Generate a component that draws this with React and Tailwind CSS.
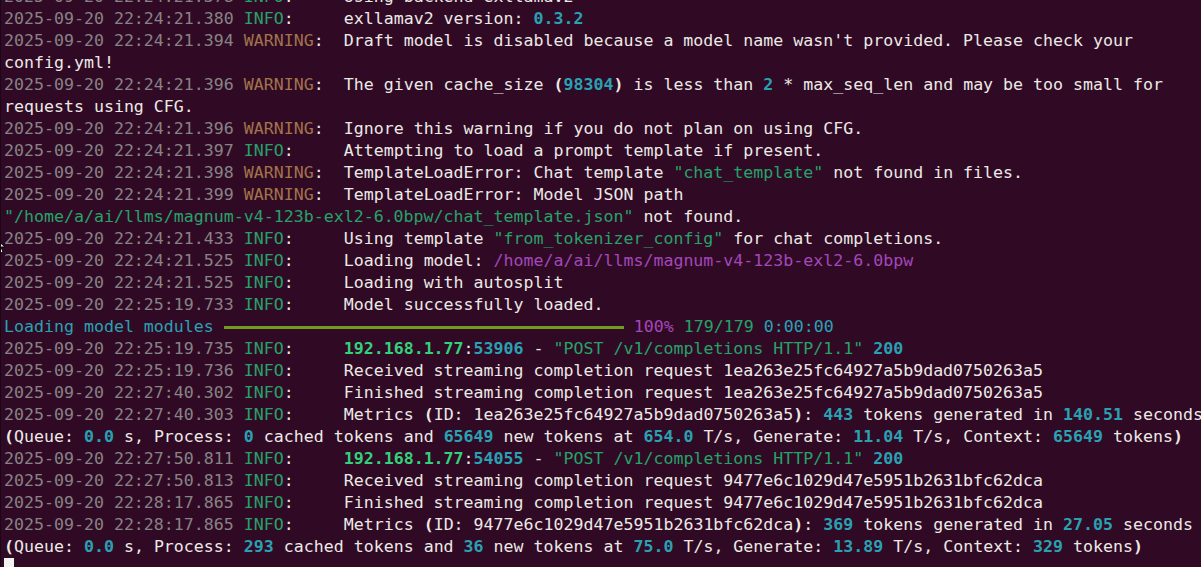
const C = {
  t: 'text-[#878386]',
  i: 'text-[#26a269]',
  w: 'text-[#a2734c]',
  n: 'text-[#2aa1b3] font-bold',
  s: 'text-[#26a269]',
  p: 'text-[#a347ba]',
  ip: 'text-[#33d17a] font-bold',
  b: 'font-bold',
  c: 'text-[#2aa1b3]',
  m: 'text-[#a347ba]',
}

const ts = (stamp) => [stamp + ' ', 't']
const info = [['INFO', 'i'], [':     ']]
const warn = [['WARNING', 'w'], [':  ']]

const lines = [
  [ts('2025-09-20 22:24:21.378'), ...info, ['Using backend exllamav2']],
  [ts('2025-09-20 22:24:21.380'), ...info, ['exllamav2 version: '], ['0.3.2', 'n']],
  [ts('2025-09-20 22:24:21.394'), ...warn, ["Draft model is disabled because a model name wasn't provided. Please check your"]],
  [['config.yml!']],
  [ts('2025-09-20 22:24:21.396'), ...warn, ['The given cache_size '], ['(', 'b'], ['98304', 'n'], [')', 'b'], [' is less than '], ['2', 'n'], [' * max_seq_len and may be too small for']],
  [['requests using CFG.']],
  [ts('2025-09-20 22:24:21.396'), ...warn, ['Ignore this warning if you do not plan on using CFG.']],
  [ts('2025-09-20 22:24:21.397'), ...info, ['Attempting to load a prompt template if present.']],
  [ts('2025-09-20 22:24:21.398'), ...warn, ['TemplateLoadError: Chat template '], ['"chat_template"', 's'], [' not found in files.']],
  [ts('2025-09-20 22:24:21.399'), ...warn, ['TemplateLoadError: Model JSON path']],
  [['"/home/a/ai/llms/magnum-v4-123b-exl2-6.0bpw/chat_template.json"', 's'], [' not found.']],
  [ts('2025-09-20 22:24:21.433'), ...info, ['Using template '], ['"from_tokenizer_config"', 's'], [' for chat completions.']],
  [ts('2025-09-20 22:24:21.525'), ...info, ['Loading model: '], ['/home/a/ai/llms/magnum-v4-123b-exl2-6.0bpw', 'p']],
  [ts('2025-09-20 22:24:21.525'), ...info, ['Loading with autosplit']],
  [ts('2025-09-20 22:25:19.733'), ...info, ['Model successfully loaded.']],
  'bar',
  [ts('2025-09-20 22:25:19.735'), ...info, ['192.168.1.77', 'ip'], [':'], ['53906', 'n'], [' - '], ['"POST /v1/completions HTTP/1.1"', 's'], [' '], ['200', 'n']],
  [ts('2025-09-20 22:25:19.736'), ...info, ['Received streaming completion request 1ea263e25fc64927a5b9dad0750263a5']],
  [ts('2025-09-20 22:27:40.302'), ...info, ['Finished streaming completion request 1ea263e25fc64927a5b9dad0750263a5']],
  [ts('2025-09-20 22:27:40.303'), ...info, ['Metrics '], ['(', 'b'], ['ID: 1ea263e25fc64927a5b9dad0750263a5'], [')', 'b'], [': '], ['443', 'n'], [' tokens generated in '], ['140.51', 'n'], [' seconds']],
  [['(', 'b'], ['Queue: '], ['0.0', 'n'], [' s, Process: '], ['0', 'n'], [' cached tokens and '], ['65649', 'n'], [' new tokens at '], ['654.0', 'n'], [' T/s, Generate: '], ['11.04', 'n'], [' T/s, Context: '], ['65649', 'n'], [' tokens'], [')', 'b']],
  [ts('2025-09-20 22:27:50.811'), ...info, ['192.168.1.77', 'ip'], [':'], ['54055', 'n'], [' - '], ['"POST /v1/completions HTTP/1.1"', 's'], [' '], ['200', 'n']],
  [ts('2025-09-20 22:27:50.813'), ...info, ['Received streaming completion request 9477e6c1029d47e5951b2631bfc62dca']],
  [ts('2025-09-20 22:28:17.865'), ...info, ['Finished streaming completion request 9477e6c1029d47e5951b2631bfc62dca']],
  [ts('2025-09-20 22:28:17.865'), ...info, ['Metrics '], ['(', 'b'], ['ID: 9477e6c1029d47e5951b2631bfc62dca'], [')', 'b'], [': '], ['369', 'n'], [' tokens generated in '], ['27.05', 'n'], [' seconds']],
  [['(', 'b'], ['Queue: '], ['0.0', 'n'], [' s, Process: '], ['293', 'n'], [' cached tokens and '], ['36', 'n'], [' new tokens at '], ['75.0', 'n'], [' T/s, Generate: '], ['13.89', 'n'], [' T/s, Context: '], ['329', 'n'], [' tokens'], [')', 'b']],
]

function Line({ segs }) {
  return (
    <div className="h-[22px] whitespace-pre">
      {segs.map(([text, k], i) => (
        <span key={i} className={k ? C[k] : undefined}>{text}</span>
      ))}
    </div>
  )
}

function ProgressLine() {
  return (
    <div className="flex h-[22px] items-center whitespace-pre">
      <span className={C.c}>Loading model modules </span>
      <span className="h-[3px] w-[400px] bg-[#729c1f]" />
      <span> </span>
      <span className={C.m}>100%</span>
      <span> </span>
      <span className={C.i}>179/179</span>
      <span> </span>
      <span className={C.c}>0:00:00</span>
    </div>
  )
}

export default function App() {
  return (
    <div className="relative h-[567px] w-[1201px] overflow-hidden border-l border-[#1c0516] bg-[#300a24] pl-[3px] text-[#ebe9e6]">
      <div
        className="-mt-[14px] text-[16.6px] leading-[22px]"
        style={{ fontFamily: '"DejaVu Sans Mono", "Liberation Mono", monospace' }}
      >
        {lines.map((l, i) => (l === 'bar' ? <ProgressLine key={i} /> : <Line key={i} segs={l} />))}
        <div className="h-[22px]">
          <div className="h-[12px] w-[10px] bg-[#f2f2f2]" />
        </div>
      </div>
      {/* mouse pointer, mostly off the left edge */}
      <svg className="absolute left-[-6px] top-[238px]" width="12" height="16" viewBox="0 0 12 16">
        <path d="M1 1 L1 13 L4 10 L6 15 L8 14 L6 9 L10 9 Z" fill="#ffffff" stroke="#000000" strokeWidth="1" />
      </svg>
    </div>
  )
}
